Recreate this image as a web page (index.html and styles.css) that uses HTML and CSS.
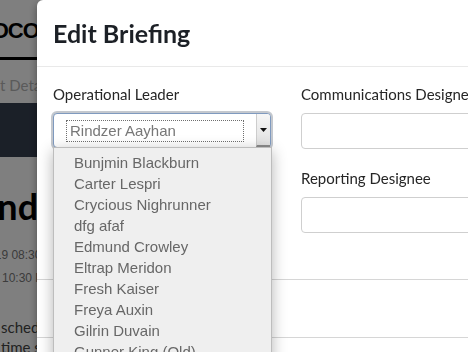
FILE: index.html
```html
<!DOCTYPE html>
<html lang="en">
<head>
    <meta charset="UTF-8">
    <meta name="viewport" content="width=device-width, initial-scale=1.0">
    <title>Edit Briefing</title>
    <link rel="stylesheet" href="styles.css">
</head>
<body>
    <div class="page">
        <header class="page-head">
            <span class="brand">PROTOCOL</span>
        </header>
        <nav class="page-tabs">
            <span class="tab">Event Details</span>
        </nav>
        <div class="page-band"></div>
        <section class="page-main">
            <h1 class="event-title">Grand Muster</h1>
            <div class="event-time start">03/12/2019 08:30 AM</div>
            <div class="event-time">10:30 PM</div>
            <p class="event-note">scheduled by command staff<br>time subject to change</p>
        </section>
    </div>

    <div class="backdrop">
        <div class="modal">
            <div class="modal-header">
                <h4 class="modal-title">Edit Briefing</h4>
            </div>

            <div class="modal-body">
                <div class="column">
                    <div class="form-group">
                        <div class="label">Operational Leader</div>
                        <div class="combo">
                            <div class="combo-field">
                                <span class="combo-value">Rindzer Aayhan</span>
                            </div>
                            <div class="combo-button">
                                <svg width="7" height="4" viewBox="0 0 7 4"><path d="M0 0h7L3.5 4z" fill="#111"/></svg>
                            </div>
                            <ul class="combo-list">
                                <li>Bunjmin Blackburn</li>
                                <li>Carter Lespri</li>
                                <li>Crycious Nighrunner</li>
                                <li>dfg afaf</li>
                                <li>Edmund Crowley</li>
                                <li>Eltrap Meridon</li>
                                <li>Fresh Kaiser</li>
                                <li>Freya Auxin</li>
                                <li>Gilrin Duvain</li>
                                <li>Gunner King (Old)</li>
                                <li>Halvard Rusk</li>
                            </ul>
                        </div>
                    </div>
                </div>

                <div class="column">
                    <div class="form-group">
                        <div class="label">Communications Designee</div>
                        <input type="text" class="input">
                    </div>
                    <div class="form-group">
                        <div class="label">Reporting Designee</div>
                        <input type="text" class="input">
                    </div>
                </div>
            </div>

            <div class="modal-section"></div>
            <div class="modal-section"></div>
        </div>
    </div>
</body>
</html>
```

FILE: styles.css
```css
body {
    margin: 0;
    width: 468px;
    height: 352px;
    overflow: hidden;
    background-color: #fff;
    font-family: Lato, "Liberation Sans", sans-serif;
}

/* page behind the dialog */

.page {
    width: 468px;
}

.page-head {
    height: 57px;
    border-bottom: 3px solid #000;
}

.brand {
    display: block;
    margin-left: -65px;
    padding-top: 18px;
    font: 700 22px/26px "Liberation Sans", sans-serif;
    letter-spacing: -1px;
    color: #000;
}

.page-tabs {
    height: 43px;
}

.tab {
    display: block;
    margin-left: -32px;
    padding-top: 15px;
    font-size: 15px;
    line-height: 20px;
    color: #b4b4b4;
}

.page-band {
    height: 54px;
    background-color: #374051;
}

.page-main {
    padding-top: 27px;
}

.event-title {
    margin: 0 0 0 -60px;
    font-size: 36px;
    line-height: 44px;
    font-weight: 700;
    color: #000;
}

.event-time {
    margin-left: 2px;
    font: 12px/23px "Liberation Sans", sans-serif;
    color: #787878;
}

.event-time.start {
    margin-top: 16px;
    margin-left: -52px;
}

.event-note {
    margin: 27px 0 0 1px;
    font-size: 15px;
    line-height: 20px;
    color: #444;
}

/* dialog */

.backdrop {
    position: fixed;
    inset: 0;
    background-color: rgba(0, 0, 0, 0.5);
    overflow: hidden;
}

.modal {
    width: 620px;
    margin-left: 37px;
    background-color: #fff;
    border-radius: 6px;
    box-shadow: 0 3px 9px rgba(0, 0, 0, 0.4);
    min-height: 400px;
}

.modal-header {
    padding: 15px 16px;
    border-bottom: 1px solid #e9e9e9;
}

.modal-title {
    margin: 0;
    font-size: 25px;
    line-height: 36px;
    font-weight: 700;
    color: #1c2026;
}

.modal-body {
    display: grid;
    grid-template-columns: 218px 218px;
    column-gap: 30px;
    padding: 17px 16px 27px;
}

.form-group {
    margin-bottom: 19px;
}

.label {
    font-size: 15px;
    line-height: 21px;
    color: #262626;
    margin-bottom: 8px;
    white-space: nowrap;
}

.input {
    display: block;
    box-sizing: border-box;
    width: 100%;
    height: 36px;
    margin: 0;
    border: 1px solid #cfcfcf;
    border-radius: 4px;
}

.modal-section {
    height: 57px;
    border-top: 1px solid #d6d6d6;
}

/* open select */

.combo {
    position: relative;
    display: flex;
    height: 33px;
    border: 1px solid #7f9abf;
    border-radius: 4px;
    box-shadow: 0 0 0 2px #c4c8ce;
    background-color: #fff;
    font-family: "Liberation Sans", Arial, sans-serif;
}

.combo-field {
    flex: 1;
    display: flex;
    align-items: center;
    padding: 0 12px;
}

.combo-value {
    flex: 1;
    height: 20px;
    line-height: 20px;
    padding-left: 3px;
    border: 1px dotted #6f6f6f;
    font-size: 15px;
    color: #777;
}

.combo-button {
    width: 13px;
    display: flex;
    align-items: center;
    justify-content: center;
    border-left: 1px solid #cdcdcd;
    border-bottom: 2px solid #8c8c8c;
    border-radius: 0 3px 0 0;
    background: linear-gradient(#f6f6f6, #e1e1e1);
}

.combo-list {
    position: absolute;
    top: 33px;
    left: -1px;
    right: -2px;
    margin: 0;
    padding: 4px 0;
    list-style: none;
    background-color: #efefef;
    border: 1px solid #bdbdbd;
    box-shadow: 0 4px 14px rgba(0, 0, 0, 0.3);
    z-index: 2;
}

.combo-list li {
    padding-left: 20px;
    font-size: 15px;
    line-height: 21px;
    color: #676767;
}
```
